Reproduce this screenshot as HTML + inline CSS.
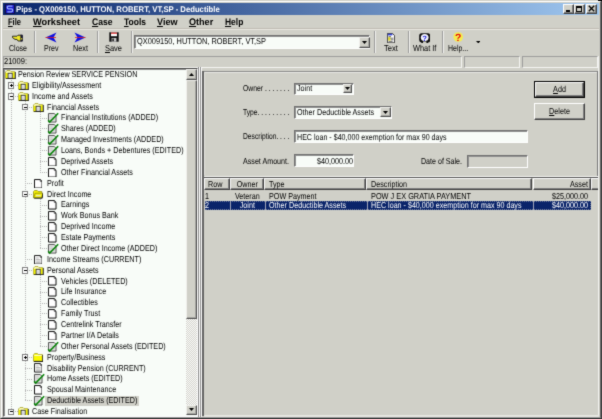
<!DOCTYPE html><html><head><meta charset="utf-8"><title>Pips</title><style>
html,body{margin:0;padding:0;}
body{width:602px;height:419px;overflow:hidden;background:#d0d0c8;font-family:"Liberation Sans",sans-serif;font-size:8.6px;color:#000;position:relative;text-rendering:geometricPrecision;}
div,span{position:absolute;box-sizing:border-box;white-space:nowrap;}
.t{margin-top:-0.7px;line-height:10px;height:10px;transform-origin:0 50%;transform:scaleX(0.837) rotate(0.02deg);}
.b{font-weight:bold;}
.sunk{border:1px solid;border-color:#808080 #fff #fff #808080;}
.sunk2{border:1px solid;border-color:#707070 #fff #fff #707070;box-shadow:inset 1px 1px 0 #909090;}
.raised{border:1px solid;border-color:#fff #404040 #404040 #fff;box-shadow:inset -1px -1px 0 #808080;background:#d0d0c8;}
.raised2{border:1px solid;border-color:#f0f0ec #505050 #505050 #f0f0ec;box-shadow:inset -1px -1px 0 #a8a8a4;background:#d0d0c8;}
.vsep{width:2px;border-left:1px solid #9c9c9c;border-right:1px solid #f0f0ee;}
u{text-decoration:underline;}
</style></head><body><svg width="0" height="0" style="position:absolute"><filter id="sf" x="0" y="0" width="100%" height="100%" color-interpolation-filters="sRGB"><feConvolveMatrix order="3" kernelMatrix="0.02 0.09 0.02 0.09 0.56 0.09 0.02 0.09 0.02" edgeMode="duplicate" preserveAlpha="true"/></filter></svg><div id="w" style="left:0;top:0;width:602px;height:419px;background:#d0d0c8;filter:url(#sf)">
<div style="left:0;top:0;width:602px;height:419px;border:1px solid;border-color:#d0d0c8 #404040 #404040 #d0d0c8;"></div>
<div style="left:1px;top:1px;width:600px;height:417px;border:1px solid;border-color:#fff #686868 #989898 #fff;"></div>
<div style="left:3px;top:3px;width:596px;height:12px;background:linear-gradient(to right,#08246a 0%,#a0c8f0 100%);"></div>
<svg style="position:absolute;left:5px;top:4px" width="10" height="10" viewBox="0 0 10 10"><rect width="10" height="10" fill="#10104a"/><rect x="1" y="1" width="8" height="8" fill="#1a1ac8"/><path d="M7.5 2.2H3.5Q2.3 2.2 2.3 3.5T3.5 4.9H6.5Q7.7 4.9 7.7 6.3T6.5 7.8H2.3" stroke="#9ab0ff" stroke-width="1.3" fill="none"/></svg>
<span class="t b" style="left:16px;top:5.4px;font-size:8.2px;color:#fff;transform:scaleX(0.94);">Pips - QX009150, HUTTON, ROBERT, VT,SP - Deductible</span>
<div class="raised" style="left:563px;top:4px;width:11px;height:10px;"></div>
<div style="left:566px;top:10px;width:4px;height:2px;background:#000"></div>
<div class="raised" style="left:574px;top:4px;width:11px;height:10px;"></div>
<div style="left:576px;top:6px;width:6px;height:6px;border:1px solid #000;border-top-width:2px"></div>
<div class="raised" style="left:586px;top:4px;width:11px;height:10px;"></div>
<svg style="position:absolute;left:588px;top:5px" width="7" height="7" viewBox="0 0 7 7"><path d="M0.8 0.8L6.2 6.2M6.2 0.8L0.8 6.2" stroke="#000" stroke-width="1.3"/></svg>
<span class="t b" style="transform:scaleX(0.7939) rotate(0.02deg);left:8.2px;top:17.4px;font-size:9.5px;line-height:12px;height:12px"><u>F</u>ile</span>
<span class="t b" style="transform:scaleX(0.971) rotate(0.02deg);left:32.8px;top:17.4px;font-size:9.5px;line-height:12px;height:12px"><u>W</u>orksheet</span>
<span class="t b" style="transform:scaleX(0.9017) rotate(0.02deg);left:91.8px;top:17.4px;font-size:9.5px;line-height:12px;height:12px"><u>C</u>ase</span>
<span class="t b" style="transform:scaleX(0.8928) rotate(0.02deg);left:123.9px;top:17.4px;font-size:9.5px;line-height:12px;height:12px"><u>T</u>ools</span>
<span class="t b" style="transform:scaleX(0.9542) rotate(0.02deg);left:156.7px;top:17.4px;font-size:9.5px;line-height:12px;height:12px"><u>V</u>iew</span>
<span class="t b" style="transform:scaleX(0.9549) rotate(0.02deg);left:189.1px;top:17.4px;font-size:9.5px;line-height:12px;height:12px"><u>O</u>ther</span>
<span class="t b" style="transform:scaleX(0.8879) rotate(0.02deg);left:225.2px;top:17.4px;font-size:9.5px;line-height:12px;height:12px"><u>H</u>elp</span>
<div style="left:3px;top:28px;width:596px;height:2px;border-top:1px solid #c0bcb4;border-bottom:1px solid #e8e6e0;"></div>
<div class="vsep" style="left:34px;top:31px;height:22px;"></div>
<div class="vsep" style="left:97px;top:31px;height:22px;"></div>
<div class="vsep" style="left:131px;top:31px;height:22px;"></div>
<div class="vsep" style="left:374px;top:31px;height:22px;"></div>
<div class="vsep" style="left:408px;top:31px;height:22px;"></div>
<div class="vsep" style="left:442px;top:31px;height:22px;"></div>
<span class="t" style="transform:scaleX(0.8188) rotate(0.02deg);left:9px;top:43.5px;">Close</span>
<span class="t" style="transform:scaleX(0.8205) rotate(0.02deg);left:44px;top:43.5px;">Prev</span>
<span class="t" style="transform:scaleX(0.8488) rotate(0.02deg);left:73px;top:43.5px;">Next</span>
<span class="t" style="transform:scaleX(0.8676) rotate(0.02deg);left:105px;top:43.5px;"><u>S</u>ave</span>
<span class="t" style="transform:scaleX(0.8817) rotate(0.02deg);left:383.7px;top:43.5px;">Text</span>
<span class="t" style="transform:scaleX(0.8592) rotate(0.02deg);left:412.6px;top:43.5px;">What If</span>
<span class="t" style="transform:scaleX(0.8091) rotate(0.02deg);left:447.7px;top:43.5px;">Help...</span>
<svg style="position:absolute;left:12px;top:33px" width="12" height="10" viewBox="0 0 12 10"><path d="M0.5 3.2H5L6 2.2H10V8H6L5 6.4H3L0.5 4.6Z" fill="#f0e828" stroke="#181818" stroke-width="0.9"/><rect x="8.4" y="1.8" width="2.4" height="6.6" fill="#181830"/><rect x="9.2" y="5" width="1" height="1.6" fill="#e8e030"/></svg>
<svg style="position:absolute;left:45px;top:32px" width="13" height="11" viewBox="0 0 13 11"><path d="M0.5 5.5L11.5 0.5L8.5 5.5L11.5 10.5Z" fill="#1010e0"/><path d="M0.5 5.5H11" stroke="#e02020" stroke-width="0.8"/></svg>
<svg style="position:absolute;left:73px;top:32px" width="13" height="11" viewBox="0 0 13 11"><path d="M12.5 5.5L1.5 0.5L4.5 5.5L1.5 10.5Z" fill="#1010e0"/><path d="M2 5.5H12.5" stroke="#e02020" stroke-width="0.8"/></svg>
<svg style="position:absolute;left:109px;top:32px" width="10" height="10" viewBox="0 0 10 10"><rect x="0.3" y="0.3" width="9.4" height="9.4" fill="#101010"/><rect x="2" y="0.6" width="6" height="3.6" fill="#fff"/><rect x="2" y="0.6" width="6" height="1.2" fill="#e03030"/><rect x="2.6" y="6" width="4.8" height="3.7" fill="#c8c8c8"/><rect x="3.4" y="6.6" width="1.4" height="2.6" fill="#101010"/></svg>
<svg style="position:absolute;left:387px;top:32.5px" width="8" height="10.2" viewBox="0 0 8 10.2"><path d="M0.4 0.4H5.4L7.6 2.6V9.8H0.4Z" fill="#fff" stroke="#101010" stroke-width="0.8"/><rect x="0.8" y="0.8" width="4.6" height="1.6" fill="#3040d8"/><path d="M1.6 3.6H4M1.6 5.2H6.4M3.6 6.8H6.4M1.6 8.4H5.6" stroke="#303030" stroke-width="0.7"/><rect x="1.2" y="4.2" width="2.2" height="3.4" fill="#e0d820"/></svg>
<svg style="position:absolute;left:419px;top:32.5px" width="11.4" height="10.2" viewBox="0 0 11.4 10.2"><path d="M2.6 0.2H8.8Q11.2 0.2 11.2 2.8V7Q11.2 9.4 9 9.6V10.2H7.4V8.6H4V10.2H2.4V9.6Q0.2 9.4 0.2 7V2.8Q0.2 0.2 2.6 0.2Z" fill="#0c0c0c"/><ellipse cx="5.7" cy="4.6" rx="3.9" ry="3.6" fill="#f4f6ff"/><text x="5.7" y="7.6" font-size="7.6" font-weight="bold" text-anchor="middle" fill="#1818d8" font-family="Liberation Sans">?</text></svg>
<svg style="position:absolute;left:452.6px;top:32.3px" width="10.4" height="10.8" viewBox="0 0 10.4 10.8"><circle cx="5.2" cy="5" r="4.8" fill="#f4ec50"/><text x="5.2" y="9.2" font-size="10.4" font-weight="bold" text-anchor="middle" fill="#e80c0c" font-family="Liberation Sans">?</text></svg>
<svg style="position:absolute;left:475.6px;top:40.8px" width="4.6" height="2.4" viewBox="0 0 4.6 2.4"><path d="M0 0H4.6L2.3 2.4Z" fill="#000"/></svg>
<div class="sunk2" style="left:134px;top:35px;width:236px;height:14px;background:#f8fcf8;"></div>
<span class="t" style="transform:scaleX(0.862) rotate(0.02deg);left:137px;top:37px;">QX009150, HUTTON, ROBERT, VT,SP</span>
<div class="raised2" style="left:358.5px;top:36.5px;width:11px;height:11px;"></div>
<svg style="position:absolute;left:361.5px;top:40.5px" width="5" height="3" viewBox="0 0 5 3"><path d="M0 0H5L2.5 3Z" fill="#000"/></svg>
<div class="sunk" style="left:3px;top:55.5px;width:459px;height:12px;border-color:#9c9c9c #f4f4f2 #f4f4f2 #9c9c9c"></div>
<div class="sunk" style="left:464px;top:55.5px;width:56px;height:12px;border-color:#9c9c9c #f4f4f2 #f4f4f2 #9c9c9c"></div>
<div class="sunk" style="left:522px;top:55.5px;width:76px;height:12px;border-color:#9c9c9c #f4f4f2 #f4f4f2 #9c9c9c"></div>
<span class="t" style="transform:scaleX(0.8746) rotate(0.02deg);left:4px;top:56.7px;">21009:</span>
<div class="sunk2" style="left:3px;top:68px;width:195px;height:349px;background:#f8fcf8;overflow:hidden;border-top-color:#484848;border-left-color:#585858"></div>
<div style="left:5px;top:70px;width:181px;height:345px;overflow:hidden">
<div style="left:5.8px;top:9.6px;width:1px;height:332.19px;background:repeating-linear-gradient(to bottom,#b4b4b4 0,#b4b4b4 1px,transparent 1px,transparent 2px)"></div>
<div style="left:19.8px;top:31.35px;width:1px;height:299.56px;background:repeating-linear-gradient(to bottom,#b4b4b4 0,#b4b4b4 1px,transparent 1px,transparent 2px)"></div>
<div style="left:34.5px;top:42.23px;width:1px;height:60.26px;background:repeating-linear-gradient(to bottom,#b4b4b4 0,#b4b4b4 1px,transparent 1px,transparent 2px)"></div>
<div style="left:34.5px;top:129.25px;width:1px;height:49.38px;background:repeating-linear-gradient(to bottom,#b4b4b4 0,#b4b4b4 1px,transparent 1px,transparent 2px)"></div>
<div style="left:34.5px;top:205.39px;width:1px;height:71.14px;background:repeating-linear-gradient(to bottom,#b4b4b4 0,#b4b4b4 1px,transparent 1px,transparent 2px)"></div>
<div style="left:19.8px;top:346.79px;width:1px;height:5.88px;background:repeating-linear-gradient(to bottom,#b4b4b4 0,#b4b4b4 1px,transparent 1px,transparent 2px)"></div>
<svg style="position:absolute;left:-0.5px;top:0.1px" width="11" height="9.2" viewBox="0 0 11 9.2"><path d="M0.5 8.4V2L2 0.5H5L6 1.6H9.8V8.4Z" fill="#fcfcb0" stroke="#a09818" stroke-width="0.7"/><rect x="0.9" y="3" width="2" height="5.2" fill="#f4f400"/><rect x="7.4" y="2.2" width="2.2" height="6" fill="#f4f400"/><rect x="3.1" y="3.3" width="4.1" height="5" fill="#fff" stroke="#303030" stroke-width="0.9"/><path d="M4 5.2H6.3M4 6.8H6.3" stroke="#a0a0a0" stroke-width="0.6"/><path d="M10.3 2V8.8M0.9 8.7H10.7" stroke="#101010" stroke-width="0.9" fill="none"/></svg>
<span class="t" style="left:13.3px;top:-0.4px;">Pension Review SERVICE PENSION</span>
<div style="left:6.3px;top:14.98px;width:7.2px;height:1px;background:repeating-linear-gradient(to right,#b4b4b4 0,#b4b4b4 1px,transparent 1px,transparent 2px)"></div>
<div style="left:3.1px;top:12.28px;width:6.4px;height:6.4px;border:0.8px solid #808080;background:#fff"></div>
<div style="left:4.7px;top:15.08px;width:3.2px;height:0.8px;background:#000"></div>
<div style="left:5.9px;top:13.88px;width:0.8px;height:3.2px;background:#000"></div>
<svg style="position:absolute;left:13.0px;top:10.98px" width="11" height="9.2" viewBox="0 0 11 9.2"><path d="M0.5 8.4V2L2 0.5H5L6 1.6H9.8V8.4Z" fill="#fcfcb0" stroke="#a09818" stroke-width="0.7"/><rect x="0.9" y="3" width="2" height="5.2" fill="#f4f400"/><rect x="7.4" y="2.2" width="2.2" height="6" fill="#f4f400"/><rect x="3.1" y="3.3" width="4.1" height="5" fill="#fff" stroke="#303030" stroke-width="0.9"/><path d="M4 5.2H6.3M4 6.8H6.3" stroke="#a0a0a0" stroke-width="0.6"/><path d="M10.3 2V8.8M0.9 8.7H10.7" stroke="#101010" stroke-width="0.9" fill="none"/></svg>
<span class="t" style="left:27.4px;top:10.48px;">Eligibility/Assessment</span>
<div style="left:6.3px;top:25.85px;width:7.2px;height:1px;background:repeating-linear-gradient(to right,#b4b4b4 0,#b4b4b4 1px,transparent 1px,transparent 2px)"></div>
<div style="left:3.1px;top:23.15px;width:6.4px;height:6.4px;border:0.8px solid #808080;background:#fff"></div>
<div style="left:4.7px;top:25.95px;width:3.2px;height:0.8px;background:#000"></div>
<svg style="position:absolute;left:13.0px;top:21.85px" width="11" height="9.2" viewBox="0 0 11 9.2"><path d="M0.5 8.4V2L2 0.5H5L6 1.6H9.8V8.4Z" fill="#fcfcb0" stroke="#a09818" stroke-width="0.7"/><rect x="0.9" y="3" width="2" height="5.2" fill="#f4f400"/><rect x="7.4" y="2.2" width="2.2" height="6" fill="#f4f400"/><rect x="3.1" y="3.3" width="4.1" height="5" fill="#fff" stroke="#303030" stroke-width="0.9"/><path d="M4 5.2H6.3M4 6.8H6.3" stroke="#a0a0a0" stroke-width="0.6"/><path d="M10.3 2V8.8M0.9 8.7H10.7" stroke="#101010" stroke-width="0.9" fill="none"/></svg>
<span class="t" style="left:27.4px;top:21.35px;">Income and Assets</span>
<div style="left:20.3px;top:36.73px;width:7.9px;height:1px;background:repeating-linear-gradient(to right,#b4b4b4 0,#b4b4b4 1px,transparent 1px,transparent 2px)"></div>
<div style="left:17.1px;top:34.03px;width:6.4px;height:6.4px;border:0.8px solid #808080;background:#fff"></div>
<div style="left:18.7px;top:36.83px;width:3.2px;height:0.8px;background:#000"></div>
<svg style="position:absolute;left:27.7px;top:32.73px" width="11" height="9.2" viewBox="0 0 11 9.2"><path d="M0.5 8.4V2L2 0.5H5L6 1.6H9.8V8.4Z" fill="#fcfcb0" stroke="#a09818" stroke-width="0.7"/><rect x="0.9" y="3" width="2" height="5.2" fill="#f4f400"/><rect x="7.4" y="2.2" width="2.2" height="6" fill="#f4f400"/><rect x="3.1" y="3.3" width="4.1" height="5" fill="#fff" stroke="#303030" stroke-width="0.9"/><path d="M4 5.2H6.3M4 6.8H6.3" stroke="#a0a0a0" stroke-width="0.6"/><path d="M10.3 2V8.8M0.9 8.7H10.7" stroke="#101010" stroke-width="0.9" fill="none"/></svg>
<span class="t" style="left:41.6px;top:32.23px;">Financial Assets</span>
<div style="left:35.0px;top:47.61px;width:7.5px;height:1px;background:repeating-linear-gradient(to right,#b4b4b4 0,#b4b4b4 1px,transparent 1px,transparent 2px)"></div>
<svg style="position:absolute;left:43.25px;top:43.31px;overflow:visible" width="8.5" height="9.6" viewBox="0 0 9 10"><path d="M0.5 0.5H6.6L8.5 2.4V9.5H0.5Z" fill="#e8e8e8" stroke="#383838" stroke-width="0.9"/><path d="M2 3H5M2 5H7M2 7H7" stroke="#b0b0b0" stroke-width="0.7"/><path d="M0.2 7.6L1.8 9.5L10.8 0.2" fill="none" stroke="#088408" stroke-width="1.7"/></svg>
<span class="t" style="left:55.7px;top:43.11px;">Financial Institutions (ADDED)</span>
<div style="left:35.0px;top:58.49px;width:7.5px;height:1px;background:repeating-linear-gradient(to right,#b4b4b4 0,#b4b4b4 1px,transparent 1px,transparent 2px)"></div>
<svg style="position:absolute;left:43.25px;top:54.19px;overflow:visible" width="8.5" height="9.6" viewBox="0 0 9 10"><path d="M0.5 0.5H6.6L8.5 2.4V9.5H0.5Z" fill="#e8e8e8" stroke="#383838" stroke-width="0.9"/><path d="M2 3H5M2 5H7M2 7H7" stroke="#b0b0b0" stroke-width="0.7"/><path d="M0.2 7.6L1.8 9.5L10.8 0.2" fill="none" stroke="#088408" stroke-width="1.7"/></svg>
<span class="t" style="left:55.7px;top:53.99px;">Shares (ADDED)</span>
<div style="left:35.0px;top:69.36px;width:7.5px;height:1px;background:repeating-linear-gradient(to right,#b4b4b4 0,#b4b4b4 1px,transparent 1px,transparent 2px)"></div>
<svg style="position:absolute;left:43.25px;top:65.06px;overflow:visible" width="8.5" height="9.6" viewBox="0 0 9 10"><path d="M0.5 0.5H6.6L8.5 2.4V9.5H0.5Z" fill="#e8e8e8" stroke="#383838" stroke-width="0.9"/><path d="M2 3H5M2 5H7M2 7H7" stroke="#b0b0b0" stroke-width="0.7"/><path d="M0.2 7.6L1.8 9.5L10.8 0.2" fill="none" stroke="#088408" stroke-width="1.7"/></svg>
<span class="t" style="left:55.7px;top:64.86px;">Managed Investments (ADDED)</span>
<div style="left:35.0px;top:80.24px;width:7.5px;height:1px;background:repeating-linear-gradient(to right,#b4b4b4 0,#b4b4b4 1px,transparent 1px,transparent 2px)"></div>
<svg style="position:absolute;left:43.25px;top:75.94px;overflow:visible" width="8.5" height="9.6" viewBox="0 0 9 10"><path d="M0.5 0.5H6.6L8.5 2.4V9.5H0.5Z" fill="#e8e8e8" stroke="#383838" stroke-width="0.9"/><path d="M2 3H5M2 5H7M2 7H7" stroke="#b0b0b0" stroke-width="0.7"/><path d="M0.2 7.6L1.8 9.5L10.8 0.2" fill="none" stroke="#088408" stroke-width="1.7"/></svg>
<span class="t" style="left:55.7px;top:75.74px;">Loans, Bonds + Debentures (EDITED)</span>
<div style="left:35.0px;top:91.12px;width:7.5px;height:1px;background:repeating-linear-gradient(to right,#b4b4b4 0,#b4b4b4 1px,transparent 1px,transparent 2px)"></div>
<svg style="position:absolute;left:43.25px;top:86.82px" width="8.5" height="9.6" viewBox="0 0 9 10"><path d="M0.5 0.5H6.6L8.5 2.4V9.5H0.5Z" fill="#fff" stroke="#000" stroke-width="1"/><path d="M6.6 0.5V2.4H8.5" fill="none" stroke="#000" stroke-width="0.6"/></svg>
<span class="t" style="left:55.7px;top:86.62px;">Deprived Assets</span>
<div style="left:35.0px;top:101.99px;width:7.5px;height:1px;background:repeating-linear-gradient(to right,#b4b4b4 0,#b4b4b4 1px,transparent 1px,transparent 2px)"></div>
<svg style="position:absolute;left:43.25px;top:97.69px" width="8.5" height="9.6" viewBox="0 0 9 10"><path d="M0.5 0.5H6.6L8.5 2.4V9.5H0.5Z" fill="#fff" stroke="#000" stroke-width="1"/><path d="M6.6 0.5V2.4H8.5" fill="none" stroke="#000" stroke-width="0.6"/></svg>
<span class="t" style="left:55.7px;top:97.49px;">Other Financial Assets</span>
<div style="left:20.3px;top:112.87px;width:7.9px;height:1px;background:repeating-linear-gradient(to right,#b4b4b4 0,#b4b4b4 1px,transparent 1px,transparent 2px)"></div>
<svg style="position:absolute;left:28.95px;top:108.57px" width="8.5" height="9.6" viewBox="0 0 9 10"><path d="M0.5 0.5H6.6L8.5 2.4V9.5H0.5Z" fill="#fff" stroke="#000" stroke-width="1"/><path d="M6.6 0.5V2.4H8.5" fill="none" stroke="#000" stroke-width="0.6"/></svg>
<span class="t" style="left:41.6px;top:108.37px;">Profit</span>
<div style="left:20.3px;top:123.75px;width:7.9px;height:1px;background:repeating-linear-gradient(to right,#b4b4b4 0,#b4b4b4 1px,transparent 1px,transparent 2px)"></div>
<div style="left:17.1px;top:121.05px;width:6.4px;height:6.4px;border:0.8px solid #808080;background:#fff"></div>
<div style="left:18.7px;top:123.85px;width:3.2px;height:0.8px;background:#000"></div>
<svg style="position:absolute;left:27.9px;top:119.75px" width="10.6" height="8.8" viewBox="0 0 10.6 8.8"><path d="M0.5 7.8V1.6L1.6 0.5H4.2L5.2 1.5H8.8V3" fill="#f8f400" stroke="#8a8410" stroke-width="0.7"/><path d="M0.6 7.9L2.2 3.2H10L8.8 7.9Z" fill="#f8f400" stroke="#6a6410" stroke-width="0.6"/><path d="M3 5.6H7.6" stroke="#e0e0c8" stroke-width="1.4"/><path d="M9.9 3.4L9.2 8.2H1.2" stroke="#101010" stroke-width="0.9" fill="none"/></svg>
<span class="t" style="left:41.6px;top:119.25px;">Direct Income</span>
<div style="left:35.0px;top:134.62px;width:7.5px;height:1px;background:repeating-linear-gradient(to right,#b4b4b4 0,#b4b4b4 1px,transparent 1px,transparent 2px)"></div>
<svg style="position:absolute;left:43.25px;top:130.32px" width="8.5" height="9.6" viewBox="0 0 9 10"><path d="M0.5 0.5H6.6L8.5 2.4V9.5H0.5Z" fill="#fff" stroke="#000" stroke-width="1"/><path d="M6.6 0.5V2.4H8.5" fill="none" stroke="#000" stroke-width="0.6"/></svg>
<span class="t" style="left:55.7px;top:130.12px;">Earnings</span>
<div style="left:35.0px;top:145.5px;width:7.5px;height:1px;background:repeating-linear-gradient(to right,#b4b4b4 0,#b4b4b4 1px,transparent 1px,transparent 2px)"></div>
<svg style="position:absolute;left:43.25px;top:141.2px" width="8.5" height="9.6" viewBox="0 0 9 10"><path d="M0.5 0.5H6.6L8.5 2.4V9.5H0.5Z" fill="#fff" stroke="#000" stroke-width="1"/><path d="M6.6 0.5V2.4H8.5" fill="none" stroke="#000" stroke-width="0.6"/></svg>
<span class="t" style="left:55.7px;top:141.0px;">Work Bonus Bank</span>
<div style="left:35.0px;top:156.38px;width:7.5px;height:1px;background:repeating-linear-gradient(to right,#b4b4b4 0,#b4b4b4 1px,transparent 1px,transparent 2px)"></div>
<svg style="position:absolute;left:43.25px;top:152.08px" width="8.5" height="9.6" viewBox="0 0 9 10"><path d="M0.5 0.5H6.6L8.5 2.4V9.5H0.5Z" fill="#fff" stroke="#000" stroke-width="1"/><path d="M6.6 0.5V2.4H8.5" fill="none" stroke="#000" stroke-width="0.6"/></svg>
<span class="t" style="left:55.7px;top:151.88px;">Deprived Income</span>
<div style="left:35.0px;top:167.25px;width:7.5px;height:1px;background:repeating-linear-gradient(to right,#b4b4b4 0,#b4b4b4 1px,transparent 1px,transparent 2px)"></div>
<svg style="position:absolute;left:43.25px;top:162.95px" width="8.5" height="9.6" viewBox="0 0 9 10"><path d="M0.5 0.5H6.6L8.5 2.4V9.5H0.5Z" fill="#fff" stroke="#000" stroke-width="1"/><path d="M6.6 0.5V2.4H8.5" fill="none" stroke="#000" stroke-width="0.6"/></svg>
<span class="t" style="left:55.7px;top:162.75px;">Estate Payments</span>
<div style="left:35.0px;top:178.13px;width:7.5px;height:1px;background:repeating-linear-gradient(to right,#b4b4b4 0,#b4b4b4 1px,transparent 1px,transparent 2px)"></div>
<svg style="position:absolute;left:43.25px;top:173.83px;overflow:visible" width="8.5" height="9.6" viewBox="0 0 9 10"><path d="M0.5 0.5H6.6L8.5 2.4V9.5H0.5Z" fill="#e8e8e8" stroke="#383838" stroke-width="0.9"/><path d="M2 3H5M2 5H7M2 7H7" stroke="#b0b0b0" stroke-width="0.7"/><path d="M0.2 7.6L1.8 9.5L10.8 0.2" fill="none" stroke="#088408" stroke-width="1.7"/></svg>
<span class="t" style="left:55.7px;top:173.63px;">Other Direct Income (ADDED)</span>
<div style="left:20.3px;top:189.01px;width:7.9px;height:1px;background:repeating-linear-gradient(to right,#b4b4b4 0,#b4b4b4 1px,transparent 1px,transparent 2px)"></div>
<svg style="position:absolute;left:28.95px;top:184.71px" width="8.5" height="9.6" viewBox="0 0 9 10"><path d="M0.5 0.5H6.6L8.5 2.4V9.5H0.5Z" fill="#fff" stroke="#101010" stroke-width="1"/><path d="M6.6 0.5V2.4H8.5" fill="none" stroke="#101010" stroke-width="0.6"/><path d="M2 3H5M2 4.8H7M2 6.4H7M2 8H7" stroke="#909090" stroke-width="0.7"/></svg>
<span class="t" style="left:41.6px;top:184.51px;">Income Streams (CURRENT)</span>
<div style="left:20.3px;top:199.89px;width:7.9px;height:1px;background:repeating-linear-gradient(to right,#b4b4b4 0,#b4b4b4 1px,transparent 1px,transparent 2px)"></div>
<div style="left:17.1px;top:197.19px;width:6.4px;height:6.4px;border:0.8px solid #808080;background:#fff"></div>
<div style="left:18.7px;top:199.99px;width:3.2px;height:0.8px;background:#000"></div>
<svg style="position:absolute;left:27.7px;top:195.89px" width="11" height="9.2" viewBox="0 0 11 9.2"><path d="M0.5 8.4V2L2 0.5H5L6 1.6H9.8V8.4Z" fill="#fcfcb0" stroke="#a09818" stroke-width="0.7"/><rect x="0.9" y="3" width="2" height="5.2" fill="#f4f400"/><rect x="7.4" y="2.2" width="2.2" height="6" fill="#f4f400"/><rect x="3.1" y="3.3" width="4.1" height="5" fill="#fff" stroke="#303030" stroke-width="0.9"/><path d="M4 5.2H6.3M4 6.8H6.3" stroke="#a0a0a0" stroke-width="0.6"/><path d="M10.3 2V8.8M0.9 8.7H10.7" stroke="#101010" stroke-width="0.9" fill="none"/></svg>
<span class="t" style="left:41.6px;top:195.39px;">Personal Assets</span>
<div style="left:35.0px;top:210.76px;width:7.5px;height:1px;background:repeating-linear-gradient(to right,#b4b4b4 0,#b4b4b4 1px,transparent 1px,transparent 2px)"></div>
<svg style="position:absolute;left:43.25px;top:206.46px" width="8.5" height="9.6" viewBox="0 0 9 10"><path d="M0.5 0.5H6.6L8.5 2.4V9.5H0.5Z" fill="#fff" stroke="#000" stroke-width="1"/><path d="M6.6 0.5V2.4H8.5" fill="none" stroke="#000" stroke-width="0.6"/></svg>
<span class="t" style="left:55.7px;top:206.26px;">Vehicles (DELETED)</span>
<div style="left:35.0px;top:221.64px;width:7.5px;height:1px;background:repeating-linear-gradient(to right,#b4b4b4 0,#b4b4b4 1px,transparent 1px,transparent 2px)"></div>
<svg style="position:absolute;left:43.25px;top:217.34px" width="8.5" height="9.6" viewBox="0 0 9 10"><path d="M0.5 0.5H6.6L8.5 2.4V9.5H0.5Z" fill="#fff" stroke="#000" stroke-width="1"/><path d="M6.6 0.5V2.4H8.5" fill="none" stroke="#000" stroke-width="0.6"/></svg>
<span class="t" style="left:55.7px;top:217.14px;">Life Insurance</span>
<div style="left:35.0px;top:232.52px;width:7.5px;height:1px;background:repeating-linear-gradient(to right,#b4b4b4 0,#b4b4b4 1px,transparent 1px,transparent 2px)"></div>
<svg style="position:absolute;left:43.25px;top:228.22px" width="8.5" height="9.6" viewBox="0 0 9 10"><path d="M0.5 0.5H6.6L8.5 2.4V9.5H0.5Z" fill="#fff" stroke="#000" stroke-width="1"/><path d="M6.6 0.5V2.4H8.5" fill="none" stroke="#000" stroke-width="0.6"/></svg>
<span class="t" style="left:55.7px;top:228.02px;">Collectibles</span>
<div style="left:35.0px;top:243.39px;width:7.5px;height:1px;background:repeating-linear-gradient(to right,#b4b4b4 0,#b4b4b4 1px,transparent 1px,transparent 2px)"></div>
<svg style="position:absolute;left:43.25px;top:239.09px" width="8.5" height="9.6" viewBox="0 0 9 10"><path d="M0.5 0.5H6.6L8.5 2.4V9.5H0.5Z" fill="#fff" stroke="#000" stroke-width="1"/><path d="M6.6 0.5V2.4H8.5" fill="none" stroke="#000" stroke-width="0.6"/></svg>
<span class="t" style="left:55.7px;top:238.89px;">Family Trust</span>
<div style="left:35.0px;top:254.27px;width:7.5px;height:1px;background:repeating-linear-gradient(to right,#b4b4b4 0,#b4b4b4 1px,transparent 1px,transparent 2px)"></div>
<svg style="position:absolute;left:43.25px;top:249.97px" width="8.5" height="9.6" viewBox="0 0 9 10"><path d="M0.5 0.5H6.6L8.5 2.4V9.5H0.5Z" fill="#fff" stroke="#000" stroke-width="1"/><path d="M6.6 0.5V2.4H8.5" fill="none" stroke="#000" stroke-width="0.6"/></svg>
<span class="t" style="left:55.7px;top:249.77px;">Centrelink Transfer</span>
<div style="left:35.0px;top:265.15px;width:7.5px;height:1px;background:repeating-linear-gradient(to right,#b4b4b4 0,#b4b4b4 1px,transparent 1px,transparent 2px)"></div>
<svg style="position:absolute;left:43.25px;top:260.85px" width="8.5" height="9.6" viewBox="0 0 9 10"><path d="M0.5 0.5H6.6L8.5 2.4V9.5H0.5Z" fill="#fff" stroke="#000" stroke-width="1"/><path d="M6.6 0.5V2.4H8.5" fill="none" stroke="#000" stroke-width="0.6"/></svg>
<span class="t" style="left:55.7px;top:260.65px;">Partner I/A Details</span>
<div style="left:35.0px;top:276.02px;width:7.5px;height:1px;background:repeating-linear-gradient(to right,#b4b4b4 0,#b4b4b4 1px,transparent 1px,transparent 2px)"></div>
<svg style="position:absolute;left:43.25px;top:271.72px;overflow:visible" width="8.5" height="9.6" viewBox="0 0 9 10"><path d="M0.5 0.5H6.6L8.5 2.4V9.5H0.5Z" fill="#e8e8e8" stroke="#383838" stroke-width="0.9"/><path d="M2 3H5M2 5H7M2 7H7" stroke="#b0b0b0" stroke-width="0.7"/><path d="M0.2 7.6L1.8 9.5L10.8 0.2" fill="none" stroke="#088408" stroke-width="1.7"/></svg>
<span class="t" style="left:55.7px;top:271.52px;">Other Personal Assets (EDITED)</span>
<div style="left:20.3px;top:286.9px;width:7.9px;height:1px;background:repeating-linear-gradient(to right,#b4b4b4 0,#b4b4b4 1px,transparent 1px,transparent 2px)"></div>
<div style="left:17.1px;top:284.2px;width:6.4px;height:6.4px;border:0.8px solid #808080;background:#fff"></div>
<div style="left:18.7px;top:287.0px;width:3.2px;height:0.8px;background:#000"></div>
<div style="left:19.9px;top:285.8px;width:0.8px;height:3.2px;background:#000"></div>
<svg style="position:absolute;left:28.0px;top:282.9px" width="10.4" height="9" viewBox="0 0 10.4 9"><path d="M0.5 8.2V1.8L1.8 0.5H4.4L5.4 1.6H9.4V8.2Z" fill="#fafa00" stroke="#98901c" stroke-width="0.7"/><path d="M1.2 2.4H8.8" stroke="#fcfce0" stroke-width="1"/><path d="M9.8 2V8.6M0.9 8.5H10.2" stroke="#101010" stroke-width="0.9" fill="none"/></svg>
<span class="t" style="left:41.6px;top:282.4px;">Property/Business</span>
<div style="left:20.3px;top:297.78px;width:7.9px;height:1px;background:repeating-linear-gradient(to right,#b4b4b4 0,#b4b4b4 1px,transparent 1px,transparent 2px)"></div>
<svg style="position:absolute;left:28.95px;top:293.48px" width="8.5" height="9.6" viewBox="0 0 9 10"><path d="M0.5 0.5H6.6L8.5 2.4V9.5H0.5Z" fill="#fff" stroke="#101010" stroke-width="1"/><path d="M6.6 0.5V2.4H8.5" fill="none" stroke="#101010" stroke-width="0.6"/><path d="M2 3H5M2 4.8H7M2 6.4H7M2 8H7" stroke="#909090" stroke-width="0.7"/></svg>
<span class="t" style="left:41.6px;top:293.28px;">Disability Pension (CURRENT)</span>
<div style="left:20.3px;top:308.66px;width:7.9px;height:1px;background:repeating-linear-gradient(to right,#b4b4b4 0,#b4b4b4 1px,transparent 1px,transparent 2px)"></div>
<svg style="position:absolute;left:28.95px;top:304.36px;overflow:visible" width="8.5" height="9.6" viewBox="0 0 9 10"><path d="M0.5 0.5H6.6L8.5 2.4V9.5H0.5Z" fill="#e8e8e8" stroke="#383838" stroke-width="0.9"/><path d="M2 3H5M2 5H7M2 7H7" stroke="#b0b0b0" stroke-width="0.7"/><path d="M0.2 7.6L1.8 9.5L10.8 0.2" fill="none" stroke="#088408" stroke-width="1.7"/></svg>
<span class="t" style="left:41.6px;top:304.16px;">Home Assets (EDITED)</span>
<div style="left:20.3px;top:319.53px;width:7.9px;height:1px;background:repeating-linear-gradient(to right,#b4b4b4 0,#b4b4b4 1px,transparent 1px,transparent 2px)"></div>
<svg style="position:absolute;left:28.95px;top:315.23px" width="8.5" height="9.6" viewBox="0 0 9 10"><path d="M0.5 0.5H6.6L8.5 2.4V9.5H0.5Z" fill="#fff" stroke="#000" stroke-width="1"/><path d="M6.6 0.5V2.4H8.5" fill="none" stroke="#000" stroke-width="0.6"/></svg>
<span class="t" style="left:41.6px;top:315.03px;">Spousal Maintenance</span>
<div style="left:20.3px;top:330.41px;width:7.9px;height:1px;background:repeating-linear-gradient(to right,#b4b4b4 0,#b4b4b4 1px,transparent 1px,transparent 2px)"></div>
<svg style="position:absolute;left:28.95px;top:326.11px;overflow:visible" width="8.5" height="9.6" viewBox="0 0 9 10"><path d="M0.5 0.5H6.6L8.5 2.4V9.5H0.5Z" fill="#e8e8e8" stroke="#383838" stroke-width="0.9"/><path d="M2 3H5M2 5H7M2 7H7" stroke="#b0b0b0" stroke-width="0.7"/><path d="M0.2 7.6L1.8 9.5L10.8 0.2" fill="none" stroke="#088408" stroke-width="1.7"/></svg>
<div style="left:40.1px;top:326.11px;width:94px;height:9.8px;background:#d0d0c8"></div>
<span class="t" style="left:41.6px;top:325.91px;">Deductible Assets (EDITED)</span>
<div style="left:6.3px;top:341.29px;width:7.2px;height:1px;background:repeating-linear-gradient(to right,#b4b4b4 0,#b4b4b4 1px,transparent 1px,transparent 2px)"></div>
<div style="left:3.1px;top:338.59px;width:6.4px;height:6.4px;border:0.8px solid #808080;background:#fff"></div>
<div style="left:4.7px;top:341.39px;width:3.2px;height:0.8px;background:#000"></div>
<svg style="position:absolute;left:13.0px;top:337.29px" width="11" height="9.2" viewBox="0 0 11 9.2"><path d="M0.5 8.4V2L2 0.5H5L6 1.6H9.8V8.4Z" fill="#fcfcb0" stroke="#a09818" stroke-width="0.7"/><rect x="0.9" y="3" width="2" height="5.2" fill="#f4f400"/><rect x="7.4" y="2.2" width="2.2" height="6" fill="#f4f400"/><rect x="3.1" y="3.3" width="4.1" height="5" fill="#fff" stroke="#303030" stroke-width="0.9"/><path d="M4 5.2H6.3M4 6.8H6.3" stroke="#a0a0a0" stroke-width="0.6"/><path d="M10.3 2V8.8M0.9 8.7H10.7" stroke="#101010" stroke-width="0.9" fill="none"/></svg>
<span class="t" style="left:27.4px;top:336.79px;">Case Finalisation</span>
</div>
<div style="left:186px;top:69px;width:10.5px;height:346px;background:#eceae6;background-image:repeating-conic-gradient(#fff 0 25%,#d0d0c8 0 50%);background-size:2px 2px"></div>
<div class="raised2" style="left:186px;top:79.5px;width:10.5px;height:239px;"></div>
<div class="raised2" style="left:186px;top:69px;width:10.5px;height:10.5px;"></div>
<svg style="position:absolute;left:188.75px;top:72.75px" width="5" height="3" viewBox="0 0 5 3"><path d="M0 3H5L2.5 0Z" fill="#000"/></svg>
<div class="raised2" style="left:186px;top:404.5px;width:10.5px;height:10.5px;"></div>
<svg style="position:absolute;left:188.75px;top:408.25px" width="5" height="3" viewBox="0 0 5 3"><path d="M0 0H5L2.5 3Z" fill="#000"/></svg>
<div style="left:198px;top:67px;width:1.1px;height:350px;background:#8c8c8c"></div>
<div style="left:199.1px;top:67px;width:1.2px;height:350px;background:#fff"></div>
<div style="left:200.3px;top:67px;width:1.1px;height:350px;background:#909090"></div>
<div style="left:201.4px;top:67px;width:1px;height:350px;background:#fff"></div>
<div style="left:202.4px;top:71px;width:1.3px;height:345px;background:#646464"></div>
<div style="left:203.7px;top:71px;width:394.3px;height:1px;background:#8c8c8c"></div>
<div style="left:203.7px;top:72px;width:393.3px;height:1px;background:#e8e8e4"></div>
<div style="left:203.7px;top:72px;width:1px;height:103px;background:#e4e4e0"></div>
<div style="left:597px;top:71px;width:1px;height:105px;background:#787878"></div>
<div style="left:598.2px;top:56px;width:1.3px;height:361px;background:#f0f0ee"></div>
<div style="left:203.7px;top:175.6px;width:394.3px;height:1px;background:#f4f4f2"></div>
<div style="left:203.7px;top:176.8px;width:394px;height:1px;background:#545454"></div>
<div style="left:203.7px;top:415px;width:395px;height:2px;background:#e6e6e0"></div>
<span class="t" style="transform:scaleX(0.7898) rotate(0.02deg);left:243px;top:84px;">Owner . . . . . . .</span>
<span class="t" style="transform:scaleX(0.7833) rotate(0.02deg);left:243px;top:107.6px;">Type. . . . . . . . .</span>
<span class="t" style="transform:scaleX(0.7772) rotate(0.02deg);left:243px;top:132px;">Description. . . .</span>
<span class="t" style="transform:scaleX(0.83) rotate(0.02deg);left:243px;top:156.6px;">Asset Amount.</span>
<span class="t" style="transform:scaleX(0.8252) rotate(0.02deg);left:420.8px;top:157px;">Date of Sale.</span>
<div class="sunk2" style="left:294px;top:82.8px;width:59.6px;height:12px;background:#f8fcf8;"></div>
<div class="raised2" style="left:342.6px;top:83.8px;width:9.8px;height:9.6px;"></div>
<svg style="position:absolute;left:345.0px;top:87.1px" width="5" height="3" viewBox="0 0 5 3"><path d="M0 0H5L2.5 3Z" fill="#000"/></svg>
<span class="t" style="left:297px;top:84px;">Joint</span>
<div class="sunk2" style="left:294px;top:106.3px;width:97.8px;height:12.3px;background:#f8fcf8;"></div>
<div class="raised2" style="left:380.4px;top:107.3px;width:10.2px;height:10.2px;"></div>
<svg style="position:absolute;left:383.0px;top:110.89999999999999px" width="5" height="3" viewBox="0 0 5 3"><path d="M0 0H5L2.5 3Z" fill="#000"/></svg>
<span class="t" style="left:297px;top:108px;">Other Deductible Assets</span>
<div class="sunk2" style="left:294px;top:130.2px;width:234.4px;height:13.2px;background:#f8fcf8;"></div>
<span class="t" style="transform:scaleX(0.8263) rotate(0.02deg);left:296.8px;top:132.6px;">HEC loan - $40,000 exemption for max 90 days</span>
<div class="sunk2" style="left:293.6px;top:154.3px;width:60.8px;height:13.2px;background:#f8fcf8;"></div>
<span class="t" style="left:294px;width:59px;text-align:right;transform-origin:100% 50%;top:156.2px;">$40,000.00</span>
<div class="sunk2" style="left:467px;top:154.5px;width:61.4px;height:13.8px;background:#d0d0c8;"></div>
<div style="left:534px;top:81px;width:51px;height:17px;border:1px solid #000"></div>
<div class="raised" style="left:535px;top:82px;width:49px;height:15px;"></div>
<span class="t" style="left:534px;width:51px;text-align:center;transform-origin:50% 50%;top:84.5px;"><u>A</u>dd</span>
<div class="raised" style="left:534px;top:103px;width:51px;height:17px;"></div>
<span class="t" style="left:534px;width:51px;text-align:center;transform-origin:50% 50%;top:106.6px;"><u>D</u>elete</span>
<div class="raised" style="left:203.7px;top:178px;width:26.0px;height:11.6px;"></div>
<span class="t" style="left:208.2px;top:179.2px;">Row</span>
<div class="raised" style="left:229.7px;top:178px;width:34.7px;height:11.6px;"></div>
<span class="t" style="left:229.7px;width:34.7px;text-align:center;transform-origin:50% 50%;top:179.2px;">Owner</span>
<div class="raised" style="left:264.4px;top:178px;width:102.0px;height:11.6px;"></div>
<span class="t" style="left:268.9px;top:179.2px;">Type</span>
<div class="raised" style="left:366.4px;top:178px;width:166.1px;height:11.6px;"></div>
<span class="t" style="left:370.9px;top:179.2px;">Description</span>
<div class="raised" style="left:532.5px;top:178px;width:58.4px;height:11.6px;"></div>
<span class="t" style="left:532.5px;width:54.9px;text-align:right;transform-origin:100% 50%;top:179.2px;">Asset</span>
<div class="raised" style="left:590.9px;top:178px;width:7.0px;height:11.6px;border-right:none;box-shadow:inset 0 -1px 0 #808080;"></div>
<span class="t" style="left:205.4px;top:191.5px;color:#000;">1</span>
<span class="t" style="left:229.7px;width:34.7px;text-align:center;transform-origin:50% 50%;top:191.5px;color:#000;">Veteran</span>
<span class="t" style="left:269px;top:191.5px;color:#000;">POW Payment</span>
<span class="t" style="transform:scaleX(0.8548) rotate(0.02deg);left:371px;top:191.5px;color:#000;">POW J EX GRATIA PAYMENT</span>
<span class="t" style="left:532.5px;width:55px;text-align:right;transform-origin:100% 50%;top:191.5px;color:#000;">$25,000.00</span>
<div style="left:204.5px;top:201.3px;width:386.3px;height:8.5px;background:#0a246a;outline:1px dotted rgba(208,208,200,0.45);outline-offset:-1px"></div>
<div style="left:230.0px;top:201.3px;width:1px;height:8.5px;background:#a0a4b8"></div>
<div style="left:264.7px;top:201.3px;width:1px;height:8.5px;background:#a0a4b8"></div>
<div style="left:366.7px;top:201.3px;width:1px;height:8.5px;background:#a0a4b8"></div>
<div style="left:532.8px;top:201.3px;width:1px;height:8.5px;background:#a0a4b8"></div>
<span class="t" style="left:205.4px;top:200.3px;color:#fff;">2</span>
<span class="t" style="left:229.7px;width:34.7px;text-align:center;transform-origin:50% 50%;top:200.3px;color:#fff;">Joint</span>
<span class="t" style="left:269px;top:200.3px;color:#fff;">Other Deductible Assets</span>
<span class="t" style="transform:scaleX(0.8313) rotate(0.02deg);left:371px;top:200.3px;color:#fff;">HEC loan - $40,000 exemption for max 90 days</span>
<span class="t" style="left:532.5px;width:55px;text-align:right;transform-origin:100% 50%;top:200.3px;color:#fff;">$40,000.00</span>
<div style="left:598px;top:0;width:4px;height:1px;background:#000"></div>
</div></body></html>
